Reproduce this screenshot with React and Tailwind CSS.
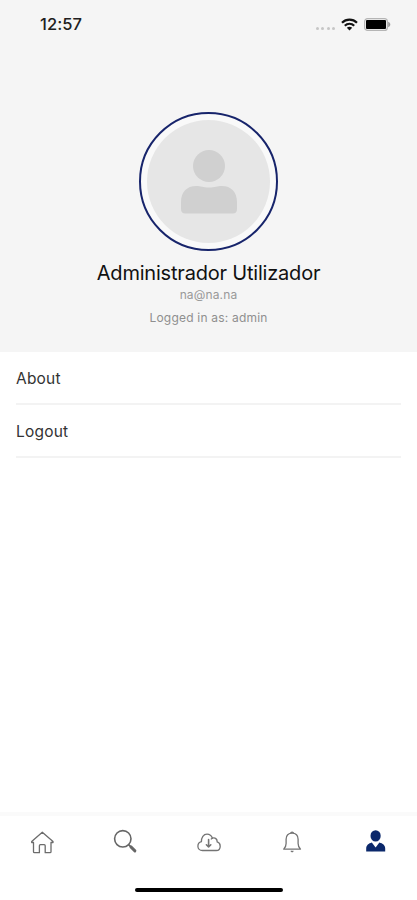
function StatusBar() {
  return (
    <div className="flex h-[48px] items-center justify-between pl-[40px] pr-[26px]">
      <span className="text-[16.5px] leading-[20px] font-medium tracking-[0.1px] text-[#202020]">12:57</span>
      <div className="flex items-center">
        <div className="mt-[8px] mr-[6px] flex gap-[2.5px]">
          <i className="size-[3px] rounded-full bg-[#c6c6c6]" />
          <i className="size-[3px] rounded-full bg-[#c6c6c6]" />
          <i className="size-[3px] rounded-full bg-[#c6c6c6]" />
          <i className="size-[3px] rounded-full bg-[#c6c6c6]" />
        </div>
        <svg width="17" height="13" viewBox="0 0 17 13" fill="none" stroke="#111" strokeWidth="2.2">
          <path d="M1 4.8C5.2 .6 11.8 .6 16 4.8" />
          <path d="M3.8 7.7C6.4 5.1 10.6 5.1 13.2 7.7" />
          <path d="M5.8 9.7C7.3 8.3 9.7 8.3 11.2 9.7L8.5 12.5Z" fill="#111" stroke="none" />
        </svg>
        <svg className="ml-[6px]" width="27" height="13" viewBox="0 0 27 13">
          <rect x=".6" y=".6" width="22.8" height="11.8" rx="3" fill="#f4f4f4" stroke="#b5b5b5" strokeWidth="1.2" />
          <rect x="2" y="2" width="20" height="9" rx="1" fill="#000" />
          <path d="M24.2 3.8C27 5 27 8 24.2 9.200Z" fill="#999" />
        </svg>
      </div>
    </div>
  );
}

function Profile() {
  return (
    <div className="flex flex-col items-center pt-[64px]">
      <div className="flex size-[139px] items-center justify-center rounded-full border-2 border-[#17246b] bg-[#f9f9f9]">
        <div className="flex size-[123px] items-center justify-center rounded-full bg-[#e6e6e6]">
          <svg width="56" height="64" viewBox="0 0 56 64" fill="#d0d0d0">
            <circle cx="28" cy="16" r="16" />
            <path d="M0 52C0 42 6 36 15 36C20 36 22 37.5 28 37.5S36 36 41 36C50 36 56 42 56 52V59Q56 63.500 51.500 63.500H4.500Q0 63.500 0 59Z" />
          </svg>
        </div>
      </div>
      <h1 className="mt-[9px] text-[20px] leading-[26px] font-normal tracking-[-0.2px] text-[#111]">Administrador Utilizador</h1>
      <p className="mt-[1px] text-[12px] leading-[16px] tracking-[0.15px] text-[#999]">na@na.na</p>
      <p className="mt-[7px] text-[12px] leading-[16px] tracking-[0.2px] text-[#8f8f8f]">Logged in as: admin</p>
    </div>
  );
}

function MenuRow({ label }) {
  return (
    <div className="mx-[16px] flex h-[53px] items-center border-b-2 border-[#f3f3f3] pt-[2px] text-[15.5px] tracking-[0.2px] text-[#333]">
      {label}
    </div>
  );
}

function TabBar() {
  return (
    <nav className="h-[88px] border-t-4 border-[#fafafa] bg-white">
      <div className="grid h-[52px] grid-cols-5 justify-items-center pt-[13px]">
        <svg width="26" height="26" viewBox="0 0 26 26" fill="none" stroke="#6c6c6c" strokeWidth="1.3" strokeLinejoin="round" strokeLinecap="round">
          <path d="M4.500 13.500V22.700Q4.500 23.700 5.500 23.700H10.400V16.700Q10.400 15.700 11.400 15.700H15.200Q16.200 15.700 16.200 16.700V23.700H21Q22 23.700 22 22.700V13.500M4.300 13.500H2.700V12.500L13.300 3.300L24 12.500V13.500H22.200" />
        </svg>
        <svg width="26" height="26" viewBox="0 0 26 26" fill="none" stroke="#666">
          <circle cx="10.800" cy="9.800" r="8.200" strokeWidth="1.600" />
          <path d="M16.600 15.600L18.600 17.600" strokeWidth="1.500" />
          <path d="M18.900 17.900L22.900 21.900" strokeWidth="2.900" strokeLinecap="round" />
        </svg>
        <svg width="26" height="26" viewBox="0 0 26 26" fill="none" stroke="#747474" strokeWidth="1.3" strokeLinecap="round" strokeLinejoin="round">
          <g transform="translate(1 0)">
            <path d="M6.500 21.500C3.700 21.500 1.900 19.700 1.900 17.200C1.900 14.900 3.300 13.200 5.400 12.700C5.300 8.500 7.500 5.100 11 5.100C13.600 5.100 15.500 6.500 16.400 9.200C19.100 8.300 21.300 10 21.200 12.900C23.200 13.400 24.200 15 24.200 17.200C24.200 19.800 22.600 21.500 20.200 21.500Z" />
            <path d="M16.400 9.200L15.200 10" />
            <path d="M12.600 10.500V18M10.400 15.800L12.600 18L14.800 15.800" strokeWidth="1.600" />
          </g>
        </svg>
        <svg width="26" height="26" viewBox="0 0 26 26" fill="none" stroke="#747474" strokeWidth="1.300" strokeLinecap="round" strokeLinejoin="round">
          <path d="M4.700 20.100H21.500C19.800 18.500 19.100 16.800 19.100 14.400V10.200C19.100 6.400 16.900 4.200 13.100 4.200S7.100 6.400 7.100 10.200V14.400C7.100 16.800 6.400 18.500 4.700 20.100Z" />
          <path d="M11.900 3.700Q13.100 2.500 14.300 3.700M12.200 22.200Q13.100 23.300 14 22.200" />
        </svg>
        <svg width="26" height="26" viewBox="0 0 26 26" fill="#0b286b">
          <ellipse cx="13.600" cy="6.900" rx="5.100" ry="5.700" />
          <path d="M4.200 22.500V19.500C4.200 16.200 6.700 14.400 9.800 13.500L13.600 18.500L17.400 13.500C20.700 14.400 23.200 16.200 23.200 19.500V22.500Z" />
        </svg>
      </div>
      <div className="mx-auto mt-[20px] h-[4px] w-[148px] rounded-full bg-black" />
    </nav>
  );
}

export default function App() {
  return (
    <div className="flex h-[900px] w-[417px] flex-col bg-white font-['Inter','Liberation_Sans',sans-serif]">
      <header className="h-[352px] bg-[#f5f5f5]">
        <StatusBar />
        <Profile />
      </header>
      <main className="flex-1">
        <MenuRow label="About" />
        <MenuRow label="Logout" />
      </main>
      <TabBar />
    </div>
  );
}
